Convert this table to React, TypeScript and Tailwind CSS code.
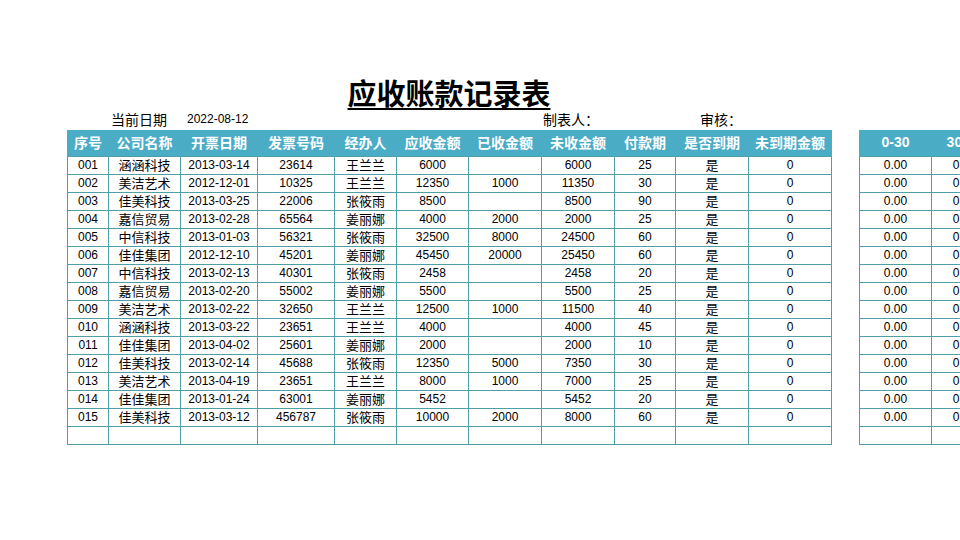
import React from "react";

const rows: string[][] = [
  ["001", "涵涵科技", "2013-03-14", "23614", "王兰兰", "6000", "", "6000", "25", "是", "0"],
  ["002", "美洁艺术", "2012-12-01", "10325", "王兰兰", "12350", "1000", "11350", "30", "是", "0"],
  ["003", "佳美科技", "2013-03-25", "22006", "张筱雨", "8500", "", "8500", "90", "是", "0"],
  ["004", "嘉信贸易", "2013-02-28", "65564", "姜丽娜", "4000", "2000", "2000", "25", "是", "0"],
  ["005", "中信科技", "2013-01-03", "56321", "张筱雨", "32500", "8000", "24500", "60", "是", "0"],
  ["006", "佳佳集团", "2012-12-10", "45201", "姜丽娜", "45450", "20000", "25450", "60", "是", "0"],
  ["007", "中信科技", "2013-02-13", "40301", "张筱雨", "2458", "", "2458", "20", "是", "0"],
  ["008", "嘉信贸易", "2013-02-20", "55002", "姜丽娜", "5500", "", "5500", "25", "是", "0"],
  ["009", "美洁艺术", "2013-02-22", "32650", "王兰兰", "12500", "1000", "11500", "40", "是", "0"],
  ["010", "涵涵科技", "2013-03-22", "23651", "王兰兰", "4000", "", "4000", "45", "是", "0"],
  ["011", "佳佳集团", "2013-04-02", "25601", "姜丽娜", "2000", "", "2000", "10", "是", "0"],
  ["012", "佳美科技", "2013-02-14", "45688", "张筱雨", "12350", "5000", "7350", "30", "是", "0"],
  ["013", "美洁艺术", "2013-04-19", "23651", "王兰兰", "8000", "1000", "7000", "25", "是", "0"],
  ["014", "佳佳集团", "2013-01-24", "63001", "姜丽娜", "5452", "", "5452", "20", "是", "0"],
  ["015", "佳美科技", "2013-03-12", "456787", "张筱雨", "10000", "2000", "8000", "60", "是", "0"],
  ["", "", "", "", "", "", "", "", "", "", ""],
];

const headers = ["序号", "公司名称", "开票日期", "发票号码", "经办人", "应收金额", "已收金额", "未收金额", "付款期", "是否到期", "未到期金额"];
const widths = [41, 72, 77, 77, 62, 72, 73, 73, 61, 73, 83];

const font = { fontFamily: '"Liberation Sans", Arial, "Noto Sans CJK SC", sans-serif' };
const cjk = { fontFamily: '"Noto Sans CJK SC", sans-serif' };
const isCjk = (s: string) => /[\u4e00-\u9fff]/.test(s);

export default function App() {
  return (
    <div className="w-[960px] h-[540px] overflow-hidden bg-white relative" style={font}>
      <div className="pt-[76px] pl-[67px]">
        <div className="w-[764px] flex justify-center h-[35px]">
          <span
            className="text-[29px] leading-[33px] font-bold underline underline-offset-[3px] decoration-[2px] text-black"
            style={cjk}
          >
            应收账款记录表
          </span>
        </div>
        <div className="flex items-center h-[19px] pb-[3px] text-black leading-[16px]">
          <span className="ml-[44px] w-[76px] text-[14px]" style={cjk}>当前日期</span>
          <span className="w-[356px] text-[12px]">2022-08-12</span>
          <span className="w-[157px] text-[14px]" style={cjk}>制表人：</span>
          <span className="text-[14px]" style={cjk}>审核：</span>
        </div>
        <div className="flex items-start gap-[27px]">
          <table className="table-fixed border-collapse w-[764px] shrink-0">
            <colgroup>
              {widths.map((w, i) => (
                <col key={i} style={{ width: w }} />
              ))}
            </colgroup>
            <thead>
              <tr className="h-[26px] bg-[#4bacc6]">
                {headers.map((h, i) => (
                  <th
                    key={i}
                    className="p-0 text-white font-bold text-[14px] text-center whitespace-nowrap border-x border-[#4bacc6]"
                    style={cjk}
                  >
                    {h}
                  </th>
                ))}
              </tr>
            </thead>
            <tbody>
              {rows.map((r, ri) => (
                <tr key={ri} className="h-[18px]">
                  {r.map((c, ci) =>
                    isCjk(c) ? (
                      <td
                        key={ci}
                        className="p-0 border border-[#4f9fa8] text-center text-[13px] leading-[16px] text-black whitespace-nowrap"
                        style={cjk}
                      >
                        {c}
                      </td>
                    ) : (
                      <td
                        key={ci}
                        className="p-0 border border-[#4f9fa8] text-center text-[12px] leading-[16px] text-black whitespace-nowrap"
                      >
                        {c}
                      </td>
                    )
                  )}
                </tr>
              ))}
            </tbody>
          </table>
          <table className="table-fixed border-collapse w-[138px] shrink-0">
            <colgroup>
              <col style={{ width: 72 }} />
              <col style={{ width: 66 }} />
            </colgroup>
            <thead>
              <tr className="h-[26px] bg-[#4bacc6]">
                <th className="p-0 text-white font-bold text-[14px] text-center border-x border-[#4bacc6]">0-30</th>
                <th className="p-0 text-white font-bold text-[14px] text-center border-x border-[#4bacc6] whitespace-nowrap">30-60</th>
              </tr>
            </thead>
            <tbody>
              {rows.map((r, ri) => (
                <tr key={ri} className="h-[18px]">
                  <td className="p-0 border border-[#4f9fa8] text-center text-[12px] leading-[16px] text-black">{r[0] ? "0.00" : ""}</td>
                  <td className="p-0 border border-[#4f9fa8] text-center text-[12px] leading-[16px] text-black">{r[0] ? "0.00" : ""}</td>
                </tr>
              ))}
            </tbody>
          </table>
        </div>
      </div>
    </div>
  );
}
